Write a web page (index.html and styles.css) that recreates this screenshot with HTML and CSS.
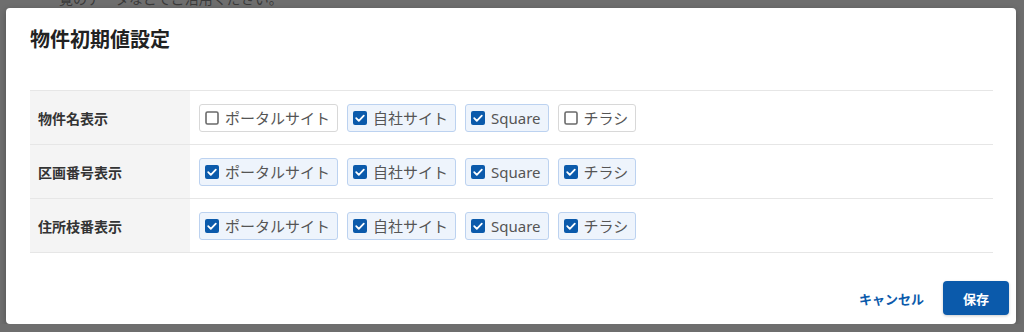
FILE: index.html
```html
<!DOCTYPE html>
<html>
<head>
    <title>物件初期値設定</title>
    <meta charset="utf-8">
    <meta name="viewport" content="width=device-width, initial-scale=1">
    <link rel="stylesheet" href="styles.css">
</head>
<body>
    <p class="page-note">一覧のデータなどでご活用ください。</p>

    <div class="modal">
        <div class="modal-header">
            <h2>物件初期値設定</h2>
        </div>

        <table class="setting-table">
            <tr>
                <th>物件名表示</th>
                <td>
                    <div class="option-list">
                        <label class="option"><svg class="box" viewBox="0 0 14 14"><rect x="1" y="1" width="12" height="12" rx="1.5" class="box-off"/></svg>ポータルサイト</label>
                        <label class="option checked"><svg class="box" viewBox="0 0 14 14"><rect width="14" height="14" rx="2" class="box-on"/><path d="M3.2 7.2l2.6 2.6 5-5.2" class="tick"/></svg>自社サイト</label>
                        <label class="option checked"><svg class="box" viewBox="0 0 14 14"><rect width="14" height="14" rx="2" class="box-on"/><path d="M3.2 7.2l2.6 2.6 5-5.2" class="tick"/></svg>Square</label>
                        <label class="option"><svg class="box" viewBox="0 0 14 14"><rect x="1" y="1" width="12" height="12" rx="1.5" class="box-off"/></svg>チラシ</label>
                    </div>
                </td>
            </tr>
            <tr>
                <th>区画番号表示</th>
                <td>
                    <div class="option-list">
                        <label class="option checked"><svg class="box" viewBox="0 0 14 14"><rect width="14" height="14" rx="2" class="box-on"/><path d="M3.2 7.2l2.6 2.6 5-5.2" class="tick"/></svg>ポータルサイト</label>
                        <label class="option checked"><svg class="box" viewBox="0 0 14 14"><rect width="14" height="14" rx="2" class="box-on"/><path d="M3.2 7.2l2.6 2.6 5-5.2" class="tick"/></svg>自社サイト</label>
                        <label class="option checked"><svg class="box" viewBox="0 0 14 14"><rect width="14" height="14" rx="2" class="box-on"/><path d="M3.2 7.2l2.6 2.6 5-5.2" class="tick"/></svg>Square</label>
                        <label class="option checked"><svg class="box" viewBox="0 0 14 14"><rect width="14" height="14" rx="2" class="box-on"/><path d="M3.2 7.2l2.6 2.6 5-5.2" class="tick"/></svg>チラシ</label>
                    </div>
                </td>
            </tr>
            <tr>
                <th>住所枝番表示</th>
                <td>
                    <div class="option-list">
                        <label class="option checked"><svg class="box" viewBox="0 0 14 14"><rect width="14" height="14" rx="2" class="box-on"/><path d="M3.2 7.2l2.6 2.6 5-5.2" class="tick"/></svg>ポータルサイト</label>
                        <label class="option checked"><svg class="box" viewBox="0 0 14 14"><rect width="14" height="14" rx="2" class="box-on"/><path d="M3.2 7.2l2.6 2.6 5-5.2" class="tick"/></svg>自社サイト</label>
                        <label class="option checked"><svg class="box" viewBox="0 0 14 14"><rect width="14" height="14" rx="2" class="box-on"/><path d="M3.2 7.2l2.6 2.6 5-5.2" class="tick"/></svg>Square</label>
                        <label class="option checked"><svg class="box" viewBox="0 0 14 14"><rect width="14" height="14" rx="2" class="box-on"/><path d="M3.2 7.2l2.6 2.6 5-5.2" class="tick"/></svg>チラシ</label>
                    </div>
                </td>
            </tr>
        </table>

        <div class="modal-footer">
            <a href="#" class="btn-link">キャンセル</a>
            <button type="button" class="btn">保存</button>
        </div>
    </div>
</body>
</html>
```

FILE: styles.css
```css
body {
    font-family: "Noto Sans", "Noto Sans CJK JP", sans-serif;
    margin: 0;
    padding: 8px 8px 0 6px;
    background-color: #6e6e6e;
    overflow: hidden;
}
.page-note {
    position: absolute;
    top: -11px;
    left: 45px;
    margin: 0;
    font-size: 14px;
    line-height: 20px;
    color: #3a3a3a;
}
.modal {
    position: relative;
    width: 1010px;
    height: 316px;
    box-sizing: border-box;
    background-color: white;
    border-radius: 4px;
    box-shadow: 0 2px 6px rgba(0,0,0,0.25);
    padding: 0 23px 0 24px;
}
.modal-header {
    padding-top: 17px;
    height: 82px;
    box-sizing: border-box;
}
.modal-header h2 {
    margin: 0;
    font-family: "Noto Sans CJK JP", sans-serif;
    font-size: 20px;
    line-height: 28px;
    font-weight: bold;
    color: #222;
}
.setting-table {
    width: 100%;
    border-collapse: collapse;
    border-top: 1px solid #e6e6e6;
}
.setting-table tr {
    border-bottom: 1px solid #e6e6e6;
}
.setting-table th {
    width: 152px;
    padding: 0 0 0 8px;
    background-color: #f4f4f4;
    text-align: left;
    font-family: "Noto Sans CJK JP", sans-serif;
    font-size: 14px;
    font-weight: bold;
    color: #333;
}
.setting-table td {
    height: 53px;
    padding: 0 0 0 9px;
}
.option-list {
    display: flex;
    gap: 9px;
}
.option {
    display: flex;
    align-items: center;
    gap: 6px;
    height: 28px;
    box-sizing: border-box;
    padding: 0 7px 0 5px;
    border: 1px solid #d8d8d8;
    border-radius: 3px;
    background-color: white;
    font-size: 15px;
    color: #555;
    cursor: pointer;
}
.option.checked {
    background-color: #eef4fc;
    border-color: #bcd2f0;
}
.box {
    width: 14px;
    height: 14px;
    flex-shrink: 0;
}
.box-off {
    fill: white;
    stroke: #6a6a6a;
    stroke-width: 1.6;
}
.box-on {
    fill: #0b5aab;
}
.tick {
    fill: none;
    stroke: white;
    stroke-width: 1.8;
    stroke-linecap: round;
    stroke-linejoin: round;
}
.modal-footer {
    display: flex;
    justify-content: flex-end;
    align-items: center;
    gap: 19px;
    margin-right: -16px;
    padding-top: 28px;
}
.btn-link {
    font-family: "Noto Sans CJK JP", sans-serif;
    font-size: 13px;
    font-weight: bold;
    color: #0b5aab;
    text-decoration: none;
}
.btn {
    width: 66px;
    height: 34px;
    background-color: #0b5aab;
    color: white;
    border: none;
    border-radius: 4px;
    font-family: "Noto Sans CJK JP", sans-serif;
    font-size: 13px;
    font-weight: bold;
    box-shadow: 0 1px 3px rgba(0,0,0,0.2);
    cursor: pointer;
}
```
